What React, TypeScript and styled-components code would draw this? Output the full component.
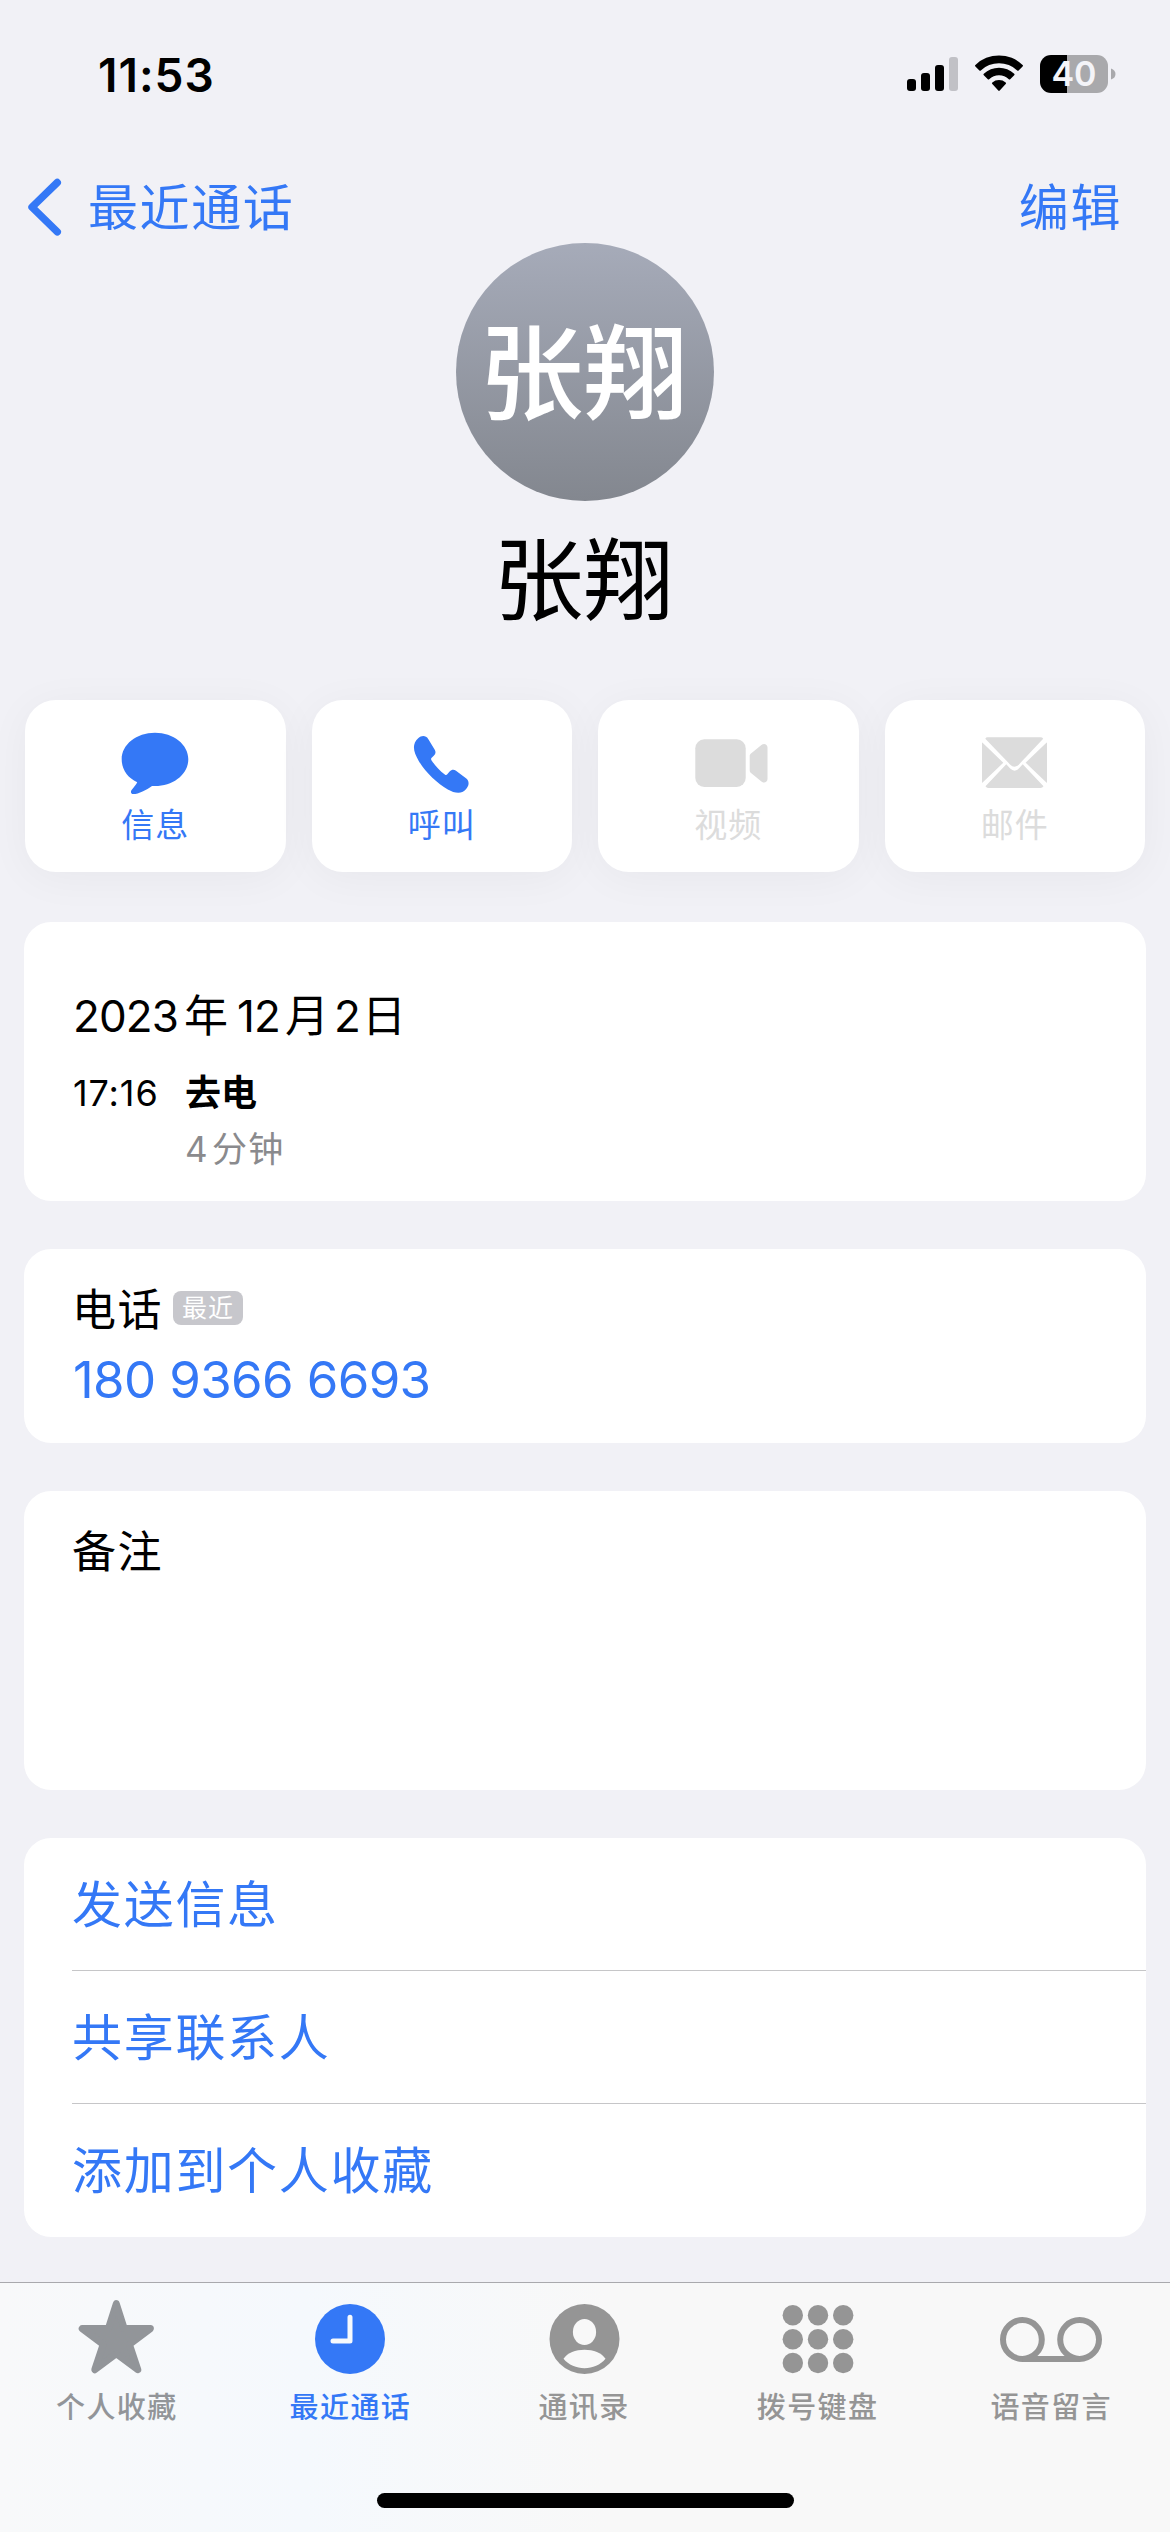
import React from 'react';
import styled, { createGlobalStyle } from 'styled-components';

const BLUE = '#3478f6';
const DISABLED = '#dcdcdc';
const TAB_GREY = '#959595';

const GlobalStyle = createGlobalStyle`
  * { box-sizing: border-box; }
  html, body { margin: 0; padding: 0; background: #f1f1f6; }
  body {
    font-family: Inter, "Noto Sans CJK SC", sans-serif;
    color: #000;
    text-autospace: no-autospace;
    -webkit-font-smoothing: antialiased;
  }
  button { font: inherit; letter-spacing: inherit; color: inherit; background: none; border: 0; padding: 0; margin: 0; }
  svg { display: block; }
`;

const Screen = styled.div`
  width: 1170px;
  height: 2532px;
  display: flex;
  flex-direction: column;
  background: #f1f1f6;
  overflow: hidden;
`;

const StatusBar = styled.header`
  height: 141px;
  flex: none;
  display: flex;
  justify-content: space-between;
  padding: 48px 54px 0 98px;
`;

const Clock = styled.div`
  height: 54px;
  line-height: 54px;
  font-size: 46px;
  font-weight: 600;
  letter-spacing: 1px;
`;

const StatusIcons = styled.div`
  display: flex;
  height: 54px;
  padding-top: 7px;
  gap: 17px;
`;

const Battery = styled.div`
  display: flex;
  align-items: center;
  gap: 3px;
  height: 38px;
`;

const BatteryBody = styled.div`
  width: 68px;
  height: 38px;
  border-radius: 11px;
  background: linear-gradient(to right, #000 0 27px, #a9a9ac 27px);
  color: #f4f4f8;
  font-size: 34px;
  line-height: 38px;
  font-weight: 600;
  text-align: center;
`;

const NavBar = styled.nav`
  height: 102px;
  flex: none;
  display: flex;
  align-items: center;
  justify-content: space-between;
  padding: 31px 48px 0 26px;
  color: ${BLUE};
  font-size: 50px;
  letter-spacing: 1.6px;
`;

const NavButton = styled.button`
  display: flex;
  align-items: center;
  gap: 25px;
  line-height: 71px;
`;

const NavLabel = styled.span`
  padding-top: 2px;
  line-height: 69px;
`;

const Profile = styled.section`
  display: flex;
  flex-direction: column;
  align-items: center;
  flex: none;
  height: 457px;
`;

const Avatar = styled.div`
  width: 258px;
  height: 258px;
  padding-right: 3px;
  border-radius: 50%;
  background: linear-gradient(#a6abb9, #83878f);
  color: #fff;
  font-size: 104px;
  line-height: 263px;
  font-weight: 500;
  text-align: center;
`;

const Name = styled.h1`
  margin: 31px 0 0;
  padding-right: 3px;
  font-size: 90px;
  line-height: 98px;
  font-weight: 400;
`;

const Actions = styled.section`
  display: grid;
  grid-template-columns: repeat(4, 1fr);
  gap: 26px;
  padding: 0 25px;
  flex: none;
`;

const Action = styled.button<{ $disabled?: boolean }>`
  height: 172px;
  display: flex;
  flex-direction: column;
  align-items: center;
  padding-top: 22px;
  border-radius: 31px;
  background: #fff;
  box-shadow: 0 6px 44px rgba(0, 0, 0, 0.045);
  color: ${(p) => (p.$disabled ? DISABLED : BLUE)};
  font-size: 33px;
  line-height: 46px;
  letter-spacing: 1px;
`;

const Cards = styled.main`
  display: flex;
  flex-direction: column;
  gap: 48px;
  padding: 50px 24px 0;
  flex: none;
`;

const Card = styled.section<{ $height: number; $top?: number }>`
  height: ${(p) => p.$height}px;
  padding: ${(p) => p.$top ?? 33}px 0 0 48px;
  border-radius: 27px;
  background: #fff;
`;

const DateHeading = styled.h2`
  margin: 0 0 23px 1px;
  font-size: 44px;
  line-height: 56px;
  font-weight: 400;
  display: flex;
`;

const DatePart = styled.span<{ $gap?: number; $digits?: boolean }>`
  margin-right: ${(p) => p.$gap ?? 0}px;
  letter-spacing: ${(p) => (p.$digits ? '-0.9px' : '0')};
`;

const CallEntry = styled.div`
  display: grid;
  grid-template-columns: 113px 1fr;
  row-gap: 4px;
  font-size: 36px;
  line-height: 52px;
`;

const CallTime = styled.span`
  padding-left: 1px;
  letter-spacing: 0.9px;
`;

const CallKind = styled.span`
  font-size: 36px;
  font-weight: 700;
`;

const Duration = styled.span`
  grid-column: 2;
  display: flex;
  gap: 3px;
  color: #8a8a8d;
  font-size: 35px;
  letter-spacing: 1.3px;
`;

const FieldLabel = styled.div`
  display: flex;
  align-items: center;
  gap: 10px;
  font-size: 44px;
  line-height: 56px;
  letter-spacing: 1.5px;
`;

const Badge = styled.span`
  width: 70px;
  height: 34px;
  margin-bottom: 5px;
  border-radius: 8px;
  background: #c7c7cc;
  color: #fff;
  font-size: 25px;
  line-height: 34px;
  letter-spacing: 1px;
  text-align: center;
`;

const PhoneLink = styled.div`
  margin: 12px 0 0 1px;
  color: ${BLUE};
  font-size: 51px;
  line-height: 60px;
  letter-spacing: -0.65px;
`;

const Row = styled.button`
  display: flex;
  width: 100%;
  height: 133px;
  align-items: center;
  padding-top: 2px;
  color: ${BLUE};
  font-size: 50px;
  line-height: 60px;
  letter-spacing: 1.7px;
  border-bottom: 1px solid #c6c6c8;
  &:last-child { border-bottom-color: transparent; }
`;

const TabBar = styled.footer`
  margin-top: auto;
  height: 250px;
  flex: none;
  display: flex;
  flex-direction: column;
  justify-content: space-between;
  align-items: center;
  padding: 16px 0 24px;
  border-top: 1px solid #a9a9ad;
  background: linear-gradient(to right, #f8f9fa 0, #f5f9fd 26%, #f8f8f8 52%);
`;

const Tabs = styled.div`
  width: 1168px;
  align-self: flex-start;
  display: grid;
  grid-template-columns: repeat(5, 1fr);
`;

const Tab = styled.button<{ $color: string }>`
  display: flex;
  flex-direction: column;
  align-items: center;
  gap: 9px;
  color: ${(p) => p.$color};
  font-size: 29px;
  line-height: 40px;
  font-weight: 500;
  letter-spacing: 1.4px;
`;

const HomeIndicator = styled.div`
  width: 417px;
  height: 15px;
  border-radius: 8px;
  background: #000;
`;

const Signal = () => (
  <svg width="51" height="38" viewBox="907 55 51 38">
    <rect x="907" y="79" width="9" height="12" rx="3" />
    <rect x="921" y="73" width="9" height="18" rx="3" />
    <rect x="935" y="65" width="9" height="26" rx="3" />
    <rect x="949" y="57" width="9" height="34" rx="3" fill="#c1c1c6" />
  </svg>
);

const Wifi = () => (
  <svg width="48" height="38" viewBox="975 55 48 38">
    <path d="M975.4 66.4a1 1 0 0 1 0-1.5a34 34 0 0 1 47.2 0a1 1 0 0 1 0 1.5l-4 4a1 1 0 0 1-1.4 0a26.5 26.5 0 0 0-36.4 0a1 1 0 0 1-1.4 0z" />
    <path d="M983.8 75.2a1 1 0 0 1 0-1.5a22.3 22.3 0 0 1 30.4 0a1 1 0 0 1 0 1.5l-4 4a1 1 0 0 1-1.4 0a14.2 14.2 0 0 0-19.6 0a1 1 0 0 1-1.4 0z" />
    <path d="M992.3 83.9a1 1 0 0 1 0-1.5a10.3 10.3 0 0 1 13.4 0a1 1 0 0 1 0 1.5l-6 6.7a1 1 0 0 1-1.4 0z" />
  </svg>
);

const BackChevron = () => (
  <svg width="37" height="61" viewBox="26 176 37 61" fill="none" stroke={BLUE} strokeWidth="7.4" strokeLinecap="round" strokeLinejoin="round">
    <path d="M57.3 181.5L32 206.2L57.3 230.8" />
  </svg>
);

const MessageIcon = () => (
  <svg width="80" height="80" viewBox="0 0 80 80" fill="currentColor">
    <path d="M40 10.7C58.5 10.7 73.3 22.4 73.3 37.3S58.5 64 40 64C39 64 38 64 37 63.9C31.5 68 23.5 72 18.4 72C15.8 72 15.2 69.6 16.8 67.8C19 65.3 21.3 62.4 22.2 60.3C12.6 55.7 6.7 47.5 6.7 37.3C6.7 22.4 21.5 10.7 40 10.7Z" />
  </svg>
);

const PhoneIcon = () => (
  <svg width="80" height="80" viewBox="0 0 80 80" fill="currentColor">
    <path d="M16.2 16.2C19.6 13.2 23.8 13.3 26.2 16.9L32.6 27.4C34 29.7 33.8 31.6 32 33.4L29.7 35.8C28.9 36.6 28.9 37.4 29.6 38.4C32.6 43 37.4 48.6 42.8 52.4C43.9 53.2 44.6 53 45.3 52.2L47.6 49.6C49.6 47.4 52 47.3 54 48.8L64 56.2C67.1 58.5 67.4 62.4 64.9 66C60.2 72.8 53 71.4 45.8 67.4C35 61.4 23.6 50.3 16.6 38.7C11.4 30 9.6 22 16.2 16.2Z" />
  </svg>
);

const VideoIcon = () => (
  <svg width="80" height="80" viewBox="0 0 80 80" fill="currentColor">
    <rect x="7.3" y="17.3" width="50.4" height="47.7" rx="9" />
    <path d="M61.7 34.3C61.7 33 62.1 32.3 63 31.6L73.4 23C75.9 21 79.5 22.3 79.5 25.5V57.1C79.5 60.3 75.9 61.6 73.4 59.6L63 51C62.1 50.3 61.7 49.6 61.7 48.3Z" />
  </svg>
);

const MailIcon = () => (
  <svg width="80" height="80" viewBox="0 0 80 80" fill="currentColor">
    <path d="M12.5 15.3H65.5Q67.3 15.3 68.2 16.7L44 42.4Q39.5 47 35 42.4L10.3 16.7Q11 15.3 12.5 15.3Z" />
    <path d="M7 21Q7 20.2 7.6 20.8L28.3 40.7L7.6 60.6Q7 61.2 7 60.4Z" />
    <path d="M72 21Q72 20.2 71.4 20.8L47.2 44L50.7 40.7L71.4 60.6Q72 61.2 72 60.4Z" />
    <path d="M31.3 42.3L35.2 46.6Q39.5 50.8 43.8 46.6L47.7 42.3L68.5 64.3Q67.4 66 65.5 66H13Q11.6 66 10.5 64.3Z" />
  </svg>
);

const StarIcon = () => (
  <svg width="80" height="80" viewBox="0 0 80 80" fill="currentColor" stroke="currentColor" strokeWidth="7" strokeLinejoin="round">
    <path d="M39.3 4.7L47.2 29.6H73.4L52.4 45.4L60.8 70.7L39.3 54.8L17.8 70.7L26.2 45.4L5.2 29.6H31.4Z" />
  </svg>
);

const ClockIcon = () => (
  <svg width="80" height="80" viewBox="0 0 80 80">
    <circle cx="40" cy="40" r="35" fill="currentColor" />
    <path d="M40 18.2V42H23" fill="none" stroke="#f6f9fd" strokeWidth="5" strokeLinecap="round" strokeLinejoin="round" />
  </svg>
);

const PersonIcon = () => (
  <svg width="80" height="80" viewBox="0 0 80 80">
    <circle cx="40.5" cy="40" r="35" fill="currentColor" />
    <ellipse cx="40.5" cy="33" rx="11.6" ry="13" fill="#f8f8f8" />
    <path d="M19.5 60.5C23.5 54.5 31.5 51.5 40.5 51.5S57.5 54.5 61.5 60.5C56.5 66.5 48.5 70 40.5 70S24.5 66.5 19.5 60.5Z" transform="translate(0 -0.7)" fill="#f8f8f8" />
  </svg>
);

const KeypadIcon = () => (
  <svg width="80" height="80" viewBox="0 0 80 80" fill="currentColor">
    {[16.3, 40.2, 64].map((y) =>
      [14.8, 40, 65.2].map((x) => <circle key={`${x}-${y}`} cx={x} cy={y} r="10.2" />),
    )}
  </svg>
);

const VoicemailIcon = () => (
  <svg width="110" height="80" viewBox="0 0 110 80" fill="none" stroke="currentColor" strokeWidth="6">
    <circle cx="26.4" cy="40.5" r="19.4" />
    <circle cx="83.6" cy="40.5" r="19.4" />
    <path d="M26.4 60H83.6" />
  </svg>
);

const dateParts = [
  { text: '2023', gap: 6, digits: true },
  { text: '年', gap: 9 },
  { text: '12', gap: 5, digits: true },
  { text: '月', gap: 5 },
  { text: '2', gap: 2, digits: true },
  { text: '日' },
];

const actions = [
  { label: '信息', icon: <MessageIcon /> },
  { label: '呼叫', icon: <PhoneIcon /> },
  { label: '视频', icon: <VideoIcon />, disabled: true },
  { label: '邮件', icon: <MailIcon />, disabled: true },
];

const tabs = [
  { label: '个人收藏', icon: <StarIcon />, color: '#929599' },
  { label: '最近通话', icon: <ClockIcon />, color: BLUE },
  { label: '通讯录', icon: <PersonIcon />, color: TAB_GREY },
  { label: '拨号键盘', icon: <KeypadIcon />, color: TAB_GREY },
  { label: '语音留言', icon: <VoicemailIcon />, color: TAB_GREY },
];

export default function App() {
  return (
    <>
      <GlobalStyle />
      <Screen>
        <StatusBar>
          <Clock>11:53</Clock>
          <StatusIcons>
            <Signal />
            <Wifi />
            <Battery>
              <BatteryBody>40</BatteryBody>
              <svg width="5" height="12" viewBox="0 0 5 12"><path d="M0 0.5Q4.5 2 4.5 6T0 11.5Z" fill="#a9a9ac" /></svg>
            </Battery>
          </StatusIcons>
        </StatusBar>
        <NavBar>
          <NavButton><BackChevron /><NavLabel>最近通话</NavLabel></NavButton>
          <NavButton><NavLabel>编辑</NavLabel></NavButton>
        </NavBar>
        <Profile>
          <Avatar>张翔</Avatar>
          <Name>张翔</Name>
        </Profile>
        <Actions>
          {actions.map((a) => (
            <Action key={a.label} $disabled={a.disabled}>
              {a.icon}
              {a.label}
            </Action>
          ))}
        </Actions>
        <Cards>
          <Card $height={279} $top={66}>
            <DateHeading>
              {dateParts.map((p) => (
                <DatePart key={p.text} $gap={p.gap} $digits={p.digits}>{p.text}</DatePart>
              ))}
            </DateHeading>
            <CallEntry>
              <CallTime>17:16</CallTime>
              <CallKind>去电</CallKind>
              <Duration><span>4</span><span>分钟</span></Duration>
            </CallEntry>
          </Card>
          <Card $height={194}>
            <FieldLabel>电话<Badge>最近</Badge></FieldLabel>
            <PhoneLink>180 9366 6693</PhoneLink>
          </Card>
          <Card $height={299}>
            <FieldLabel>备注</FieldLabel>
          </Card>
          <Card $height={399} $top={0}>
            <Row>发送信息</Row>
            <Row>共享联系人</Row>
            <Row>添加到个人收藏</Row>
          </Card>
        </Cards>
        <TabBar>
          <Tabs>
            {tabs.map((t) => (
              <Tab key={t.label} $color={t.color}>
                {t.icon}
                {t.label}
              </Tab>
            ))}
          </Tabs>
          <HomeIndicator />
        </TabBar>
      </Screen>
    </>
  );
}
